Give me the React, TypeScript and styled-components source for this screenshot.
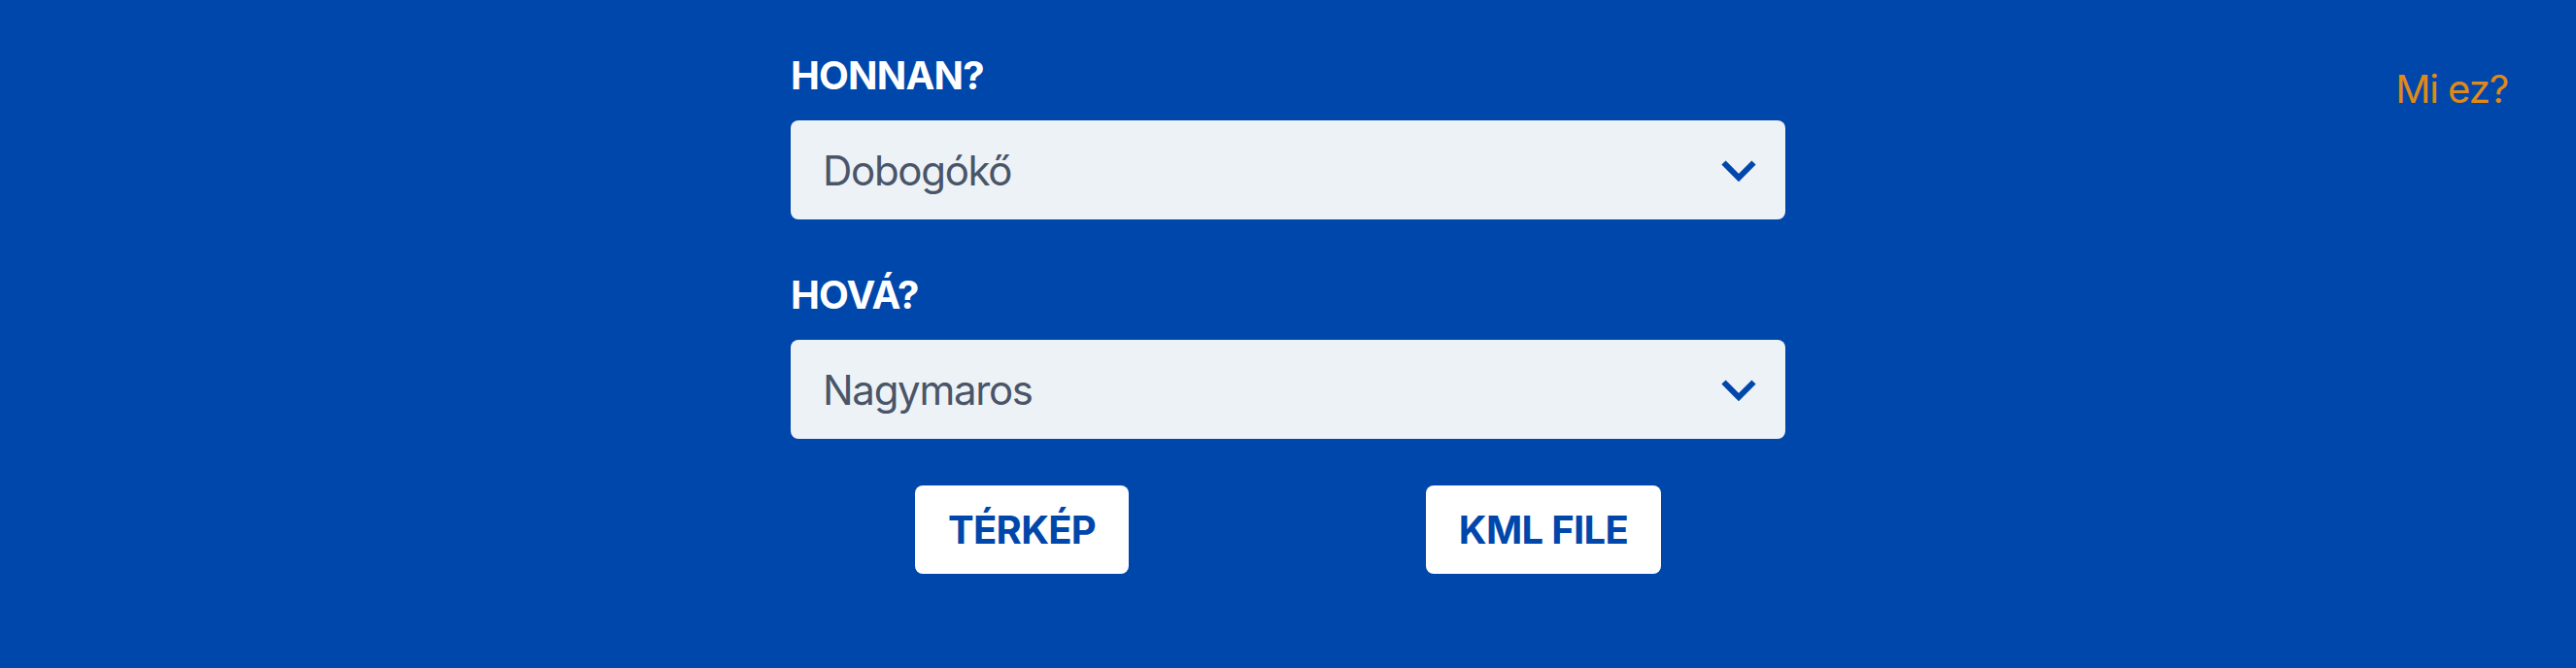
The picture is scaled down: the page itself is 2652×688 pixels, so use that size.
import styled, { createGlobalStyle } from "styled-components";

const Colors = {
  blue: "#0047ab",
  field: "#edf2f7",
  fieldText: "#4a5568",
  orange: "#e08a16",
  white: "#ffffff",
};

const GlobalStyle = createGlobalStyle`
  html, body {
    margin: 0;
    padding: 0;
    background-color: ${Colors.blue};
    font-family: Inter, "Noto Sans", "Liberation Sans", sans-serif;
  }
`;

interface PickerProps {
  label: string;
  value: string;
  options: string[];
}

function Picker({ label, value, options }: PickerProps) {
  return (
    <Field>
      <Label>{label}</Label>
      <SelectWrapper>
        <Select defaultValue={value}>
          {options.map((o) => (
            <option key={o} value={o}>
              {o}
            </option>
          ))}
        </Select>
        <ChevronWrapper>
          <svg width="36" height="23" viewBox="0 0 36 23">
            <polyline
              points="2.5,2.5 18,18 33.5,2.5"
              fill="none"
              stroke={Colors.blue}
              strokeWidth="6"
              strokeLinecap="butt"
            />
          </svg>
        </ChevronWrapper>
      </SelectWrapper>
    </Field>
  );
}

const places = ["Dobogókő", "Nagymaros", "Pilisszentkereszt", "Visegrád"];

export default function App() {
  return (
    <>
      <GlobalStyle />
      <Page>
        <div />
        <Main>
          <Picker label="HONNAN?" value="Dobogókő" options={places} />
          <Picker label="HOVÁ?" value="Nagymaros" options={places} />
          <Buttons>
            <Button>TÉRKÉP</Button>
            <Button>KML FILE</Button>
          </Buttons>
        </Main>
        <Side>
          <HelpLink href="#">Mi ez?</HelpLink>
        </Side>
      </Page>
    </>
  );
}

const Page = styled.div`
  display: grid;
  grid-template-columns: 1fr 1024px 1fr;
  min-height: 688px;
  background-color: ${Colors.blue};
`;

const Main = styled.div`
  display: flex;
  flex-direction: column;
  padding-top: 54px;
`;

const Field = styled.div`
  display: flex;
  flex-direction: column;
  gap: 22px;
  margin-bottom: 54px;
  &:nth-child(2) {
    margin-bottom: 48px;
  }
`;

const Label = styled.div`
  font-size: 40px;
  line-height: 48px;
  font-weight: 700;
  letter-spacing: -0.8px;
  color: ${Colors.white};
`;

const SelectWrapper = styled.div`
  position: relative;
  height: 102px;
`;

const Select = styled.select`
  appearance: none;
  width: 100%;
  height: 102px;
  margin: 0;
  border: none;
  border-radius: 8px;
  padding: 0 90px 0 33px;
  background-color: ${Colors.field};
  color: ${Colors.fieldText};
  font-family: Inter, "Noto Sans", "Liberation Sans", sans-serif;
  font-size: 42px;
  line-height: normal;
  letter-spacing: -1.3px;
  outline: none;
  cursor: pointer;
`;

const ChevronWrapper = styled.div`
  position: absolute;
  right: 30px;
  top: 41px;
  width: 36px;
  height: 23px;
  pointer-events: none;
  display: flex;
`;

const Buttons = styled.div`
  width: 768px;
  align-self: center;
  display: flex;
  justify-content: space-between;
`;

const Button = styled.button`
  height: 91px;
  padding: 0 34px;
  border: none;
  border-radius: 8px;
  background-color: ${Colors.white};
  color: ${Colors.blue};
  font-family: Inter, "Noto Sans", "Liberation Sans", sans-serif;
  font-size: 40px;
  line-height: 48px;
  font-weight: 700;
  letter-spacing: -0.7px;
  cursor: pointer;
`;

const Side = styled.div`
  display: flex;
  justify-content: flex-end;
  align-items: flex-start;
  padding: 68px 70px 0 0;
`;

const HelpLink = styled.a`
  font-size: 40px;
  line-height: 48px;
  letter-spacing: -1.1px;
  color: ${Colors.orange};
  text-decoration: none;
`;
